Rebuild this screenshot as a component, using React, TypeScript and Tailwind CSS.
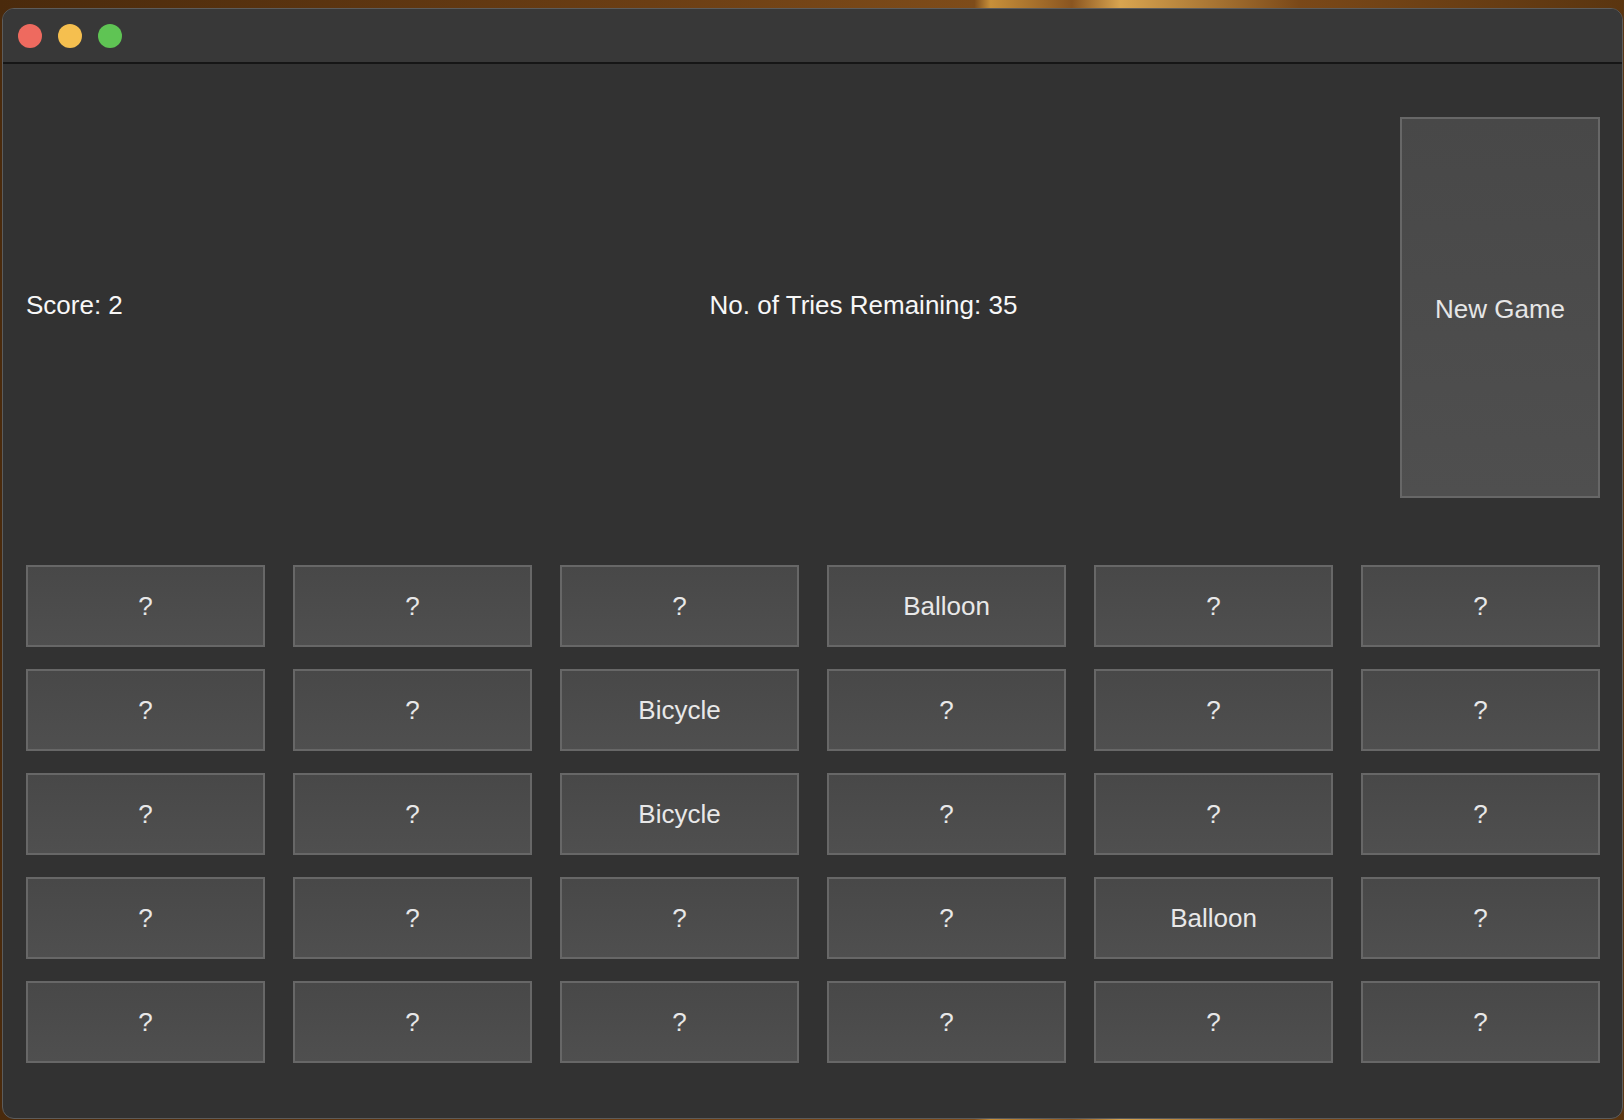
import React from "react";

const tiles = [
  ["?", "?", "?", "Balloon", "?", "?"],
  ["?", "?", "Bicycle", "?", "?", "?"],
  ["?", "?", "Bicycle", "?", "?", "?"],
  ["?", "?", "?", "?", "Balloon", "?"],
  ["?", "?", "?", "?", "?", "?"],
];

function Tile({ label }: { label: string }) {
  return (
    <button className="h-[82px] border-2 border-[#676767] bg-gradient-to-b from-[#484848] to-[#4f4f4f] text-[26px] text-[#e8e8e8] flex items-center justify-center">
      {label}
    </button>
  );
}

export default function App() {
  return (
    <div
      className="w-[1624px] h-[1120px] overflow-hidden bg-[linear-gradient(90deg,#4a2a0c_0%,#6b3e14_40%,#7e4c1a_60%,#c8903a_61%,#8a5520_66%,#d9a550_69%,#7a4818_80%,#5a3510_100%)] pt-[8px] pl-[2px] pr-[1px] pb-[1px]"
      style={{ fontFamily: '"Liberation Sans", Arial, sans-serif' }}
    >
      <div className="w-full h-full flex flex-col rounded-[12px] border border-[#5c5c5c] bg-[#323232] overflow-hidden">
        {/* Title bar */}
        <div className="h-[55px] shrink-0 bg-[#383838] border-b-2 border-[#161616] flex items-center gap-[16px] pl-[15px]">
          <span className="w-[24px] h-[24px] rounded-full bg-[#ee6a5f]" />
          <span className="w-[24px] h-[24px] rounded-full bg-[#f5bf4f]" />
          <span className="w-[24px] h-[24px] rounded-full bg-[#5fc454]" />
        </div>

        {/* Content */}
        <div className="flex-1 flex flex-col pt-[53px] pl-[23px] pr-[22px]">
          <div className="h-[381px] flex items-center">
            <div className="w-[301px] pb-[5px] text-[26px] text-[#f7f7f7]">Score: 2</div>
            <div className="flex-1 flex justify-center pb-[5px] text-[26px] text-[#f7f7f7]">
              No. of Tries Remaining: 35
            </div>
            <button className="w-[200px] h-full border-2 border-[#676767] bg-gradient-to-b from-[#484848] to-[#4f4f4f] text-[26px] text-[#e6e6e6] flex items-center justify-center pt-[4px]">
              New Game
            </button>
          </div>

          <div className="mt-[67px] grid grid-cols-6 gap-x-[28px] gap-y-[22px]">
            {tiles.flat().map((t, i) => (
              <Tile key={i} label={t} />
            ))}
          </div>
        </div>
      </div>
    </div>
  );
}
